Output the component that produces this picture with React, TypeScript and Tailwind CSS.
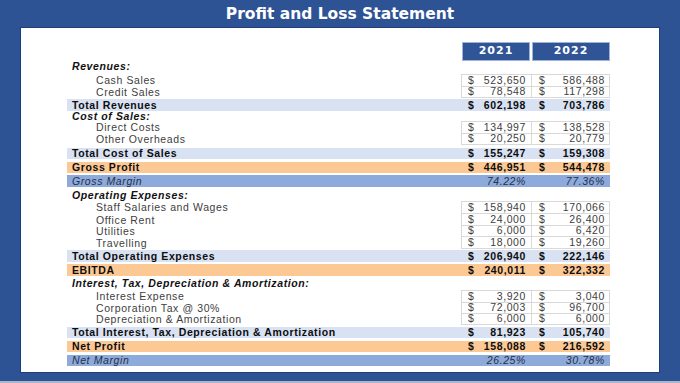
import React from 'react';

type Line = { label: string; a: string; b: string; h: number };

const sans = "font-['Liberation_Sans',Arial,sans-serif]";

const Head: React.FC<{ text: string; mt: number; h: number }> = ({ text, mt, h }) => (
  <div style={{ marginTop: mt, height: h }} className="flex items-center pl-[5px]">
    <span className="text-[10.5px] leading-none font-bold italic tracking-[0.6px] text-[#111]">{text}</span>
  </div>
);

const Group: React.FC<{ lines: Line[]; mt?: number }> = ({ lines, mt = 0 }) => (
  <div style={{ marginTop: mt }}>
    {lines.map((l, i) => (
      <div
        key={l.label}
        style={{ height: l.h + (i === 0 ? 1 : 0) }}
        className="grid grid-cols-[394px_70px_79px] text-[10.5px] leading-none tracking-[0.6px] text-[#404040]"
      >
        <div className="flex items-center pl-[29px]">{l.label}</div>
        <div className={`flex items-center justify-between pl-[6px] pr-[5px] border-l border-b border-[#d9d9d9] ${i === 0 ? 'border-t' : ''}`}>
          <span>$</span>
          <span>{l.a}</span>
        </div>
        <div className={`flex items-center justify-between pl-[7px] pr-[4px] border-l border-r border-b border-[#d9d9d9] ${i === 0 ? 'border-t' : ''}`}>
          <span>$</span>
          <span>{l.b}</span>
        </div>
      </div>
    ))}
  </div>
);

const Band: React.FC<{ label: string; a: string; b: string; tone: 'total' | 'profit' | 'margin'; mt: number; h: number }> = ({
  label,
  a,
  b,
  tone,
  mt,
  h,
}) => {
  const bg = tone === 'total' ? 'bg-[#d9e2f3]' : tone === 'profit' ? 'bg-[#fcc995]' : 'bg-[#8eaadb]';
  const margin = tone === 'margin';
  const txt = margin ? 'italic text-[#22304a]' : 'font-bold text-[#0d0d0d]';
  return (
    <div
      style={{ marginTop: mt, height: h }}
      className={`grid grid-cols-[394px_70px_79px] text-[10.5px] leading-none tracking-[0.6px] ${bg} ${txt}`}
    >
      <div className="flex items-center pl-[5px]">{label}</div>
      <div className={`flex items-center pl-[7px] pr-[5px] ${margin ? 'justify-end' : 'justify-between'}`}>
        {!margin && <span>$</span>}
        <span>{a}</span>
      </div>
      <div className={`flex items-center pl-[8px] pr-[5px] ${margin ? 'justify-end' : 'justify-between'}`}>
        {!margin && <span>$</span>}
        <span>{b}</span>
      </div>
    </div>
  );
};

export default function App() {
  return (
    <div className={`w-[680px] h-[383px] bg-[#2e5395] flex flex-col overflow-hidden ${sans}`}>
      {/* Title */}
      <div className="h-[27px] flex items-center justify-center pt-[3px]">
        <h1 className="font-['DejaVu_Sans',Verdana,sans-serif] font-bold text-[15.5px] leading-none text-white">
          Profit and Loss Statement
        </h1>
      </div>

      {/* Sheet */}
      <div className="mx-[20px] h-[346px] bg-white border border-[#1f3d78]">
        <div className="ml-[46px] w-[543px]">
          {/* Year headers */}
          <div className="mt-[14px] h-[17px] grid grid-cols-[394px_70px_79px]">
            <div />
            <div className="mx-[1px] bg-[#2f5597] border border-[#9fb3d9] flex items-center justify-center">
              <span className="font-['DejaVu_Sans',Verdana,sans-serif] font-bold text-[11px] tracking-[1px] text-white">2021</span>
            </div>
            <div className="ml-[1px] bg-[#2f5597] border border-[#9fb3d9] flex items-center justify-center">
              <span className="font-['DejaVu_Sans',Verdana,sans-serif] font-bold text-[11px] tracking-[1px] text-white">2022</span>
            </div>
          </div>

          <Head text="Revenues:" mt={1} h={13} />
          <Group
            mt={1}
            lines={[
              { label: 'Cash Sales', a: '523,650', b: '586,488', h: 11 },
              { label: 'Credit Sales', a: '78,548', b: '117,298', h: 11 },
            ]}
          />
          <Band label="Total Revenues" a="602,198" b="703,786" tone="total" mt={2} h={12} />

          <Head text="Cost of Sales:" mt={0} h={10} />
          <Group
            lines={[
              { label: 'Direct Costs', a: '134,997', b: '138,528', h: 11 },
              { label: 'Other Overheads', a: '20,250', b: '20,779', h: 11 },
            ]}
          />
          <Band label="Total Cost of Sales" a="155,247" b="159,308" tone="total" mt={4} h={11} />
          <Band label="Gross Profit" a="446,951" b="544,478" tone="profit" mt={3} h={11} />
          <Band label="Gross Margin" a="74.22%" b="77.36%" tone="margin" mt={2} h={12} />

          <Head text="Operating Expenses:" mt={2} h={12} />
          <Group
            lines={[
              { label: 'Staff Salaries and Wages', a: '158,940', b: '170,066', h: 12 },
              { label: 'Office Rent', a: '24,000', b: '26,400', h: 11 },
              { label: 'Utilities', a: '6,000', b: '6,420', h: 12 },
              { label: 'Travelling', a: '18,000', b: '19,260', h: 11 },
            ]}
          />
          <Band label="Total Operating Expenses" a="206,940" b="222,146" tone="total" mt={2} h={12} />
          <Band label="EBITDA" a="240,011" b="322,332" tone="profit" mt={2} h={12} />

          <Head text="Interest, Tax, Depreciation & Amortization:" mt={1} h={13} />
          <Group
            lines={[
              { label: 'Interest Expense', a: '3,920', b: '3,040', h: 11 },
              { label: 'Corporation Tax @ 30%', a: '72,003', b: '96,700', h: 11 },
              { label: 'Depreciation & Amortization', a: '6,000', b: '6,000', h: 11 },
            ]}
          />
          <Band label="Total Interest, Tax, Depreciation & Amortization" a="81,923" b="105,740" tone="total" mt={3} h={11} />
          <Band label="Net Profit" a="158,088" b="216,592" tone="profit" mt={3} h={11} />
          <Band label="Net Margin" a="26.25%" b="30.78%" tone="margin" mt={3} h={11} />
        </div>
      </div>

      <div className="flex-1" />
      <div className="h-[2px] bg-[#a9b5ca]" />
    </div>
  );
}
